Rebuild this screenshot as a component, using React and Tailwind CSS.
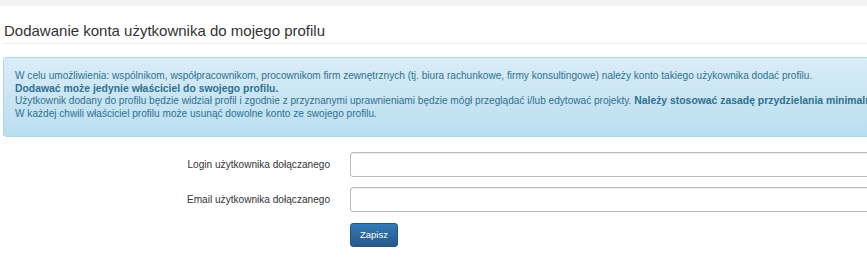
export default function App() {
  return (
    <div className="h-[270px] w-[867px] overflow-hidden bg-white font-['Liberation_Sans',Arial,sans-serif] text-[#333]">
      <div className="h-[6px] bg-[#f4f4f4]" />
      <div className="w-[1000px] pl-[3px]">
        <h3 className="mt-[16px] border-b border-[#eeeeee] pb-[4px] pl-[1px] text-[15px] leading-[17px] font-normal">
          Dodawanie konta użytkownika do mojego profilu
        </h3>

        <div className="mt-[13px] whitespace-nowrap rounded-[3px] border border-[#aed8ee] bg-gradient-to-b from-[#d9edf7] to-[#b9def0] pl-[11px] pt-[12px] pb-[15px] text-[10.1px] leading-[12.7px] text-[#31708f]">
          <div>W celu umożliwienia: wspólnikom, współpracownikom, procownikom firm zewnętrznych (tj. biura rachunkowe, firmy konsultingowe) należy konto takiego użykownika dodać profilu.</div>
          <div className="text-[10.4px] font-bold">Dodawać może jedynie właściciel do swojego profilu.</div>
          <div>
            Użytkownik dodany do profilu będzie widział profil i zgodnie z przyznanymi uprawnieniami będzie mógł przeglądać i/lub edytować projekty.{" "}
            <span className="text-[10.4px] font-bold">Należy stosować zasadę przydzielania minimalnych uprawnień.</span>
          </div>
          <div>W każdej chwili właściciel profilu może usunąć dowolne konto ze swojego profilu.</div>
        </div>

        <div className="mt-[15px] flex flex-col gap-[10.5px]">
          <div className="flex items-center gap-[20px]">
            <label className="w-[327px] text-right text-[10.1px]">Login użytkownika dołączanego</label>
            <input className="h-[25px] w-[560px] rounded-[3px] border border-[#bbbbbb] bg-white shadow-[inset_0_1px_1px_rgba(0,0,0,0.075)] outline-none" />
          </div>
          <div className="flex items-center gap-[20px]">
            <label className="w-[327px] text-right text-[10.1px]">Email użytkownika dołączanego</label>
            <input className="h-[25px] w-[560px] rounded-[3px] border border-[#bbbbbb] bg-white shadow-[inset_0_1px_1px_rgba(0,0,0,0.075)] outline-none" />
          </div>
          <div className="flex gap-[20px]">
            <div className="w-[327px]" />
            <button className="h-[24px] w-[48px] rounded-[3px] border border-[#245580] bg-gradient-to-b from-[#337ab7] to-[#265a88] text-[9.5px] text-white">
              Zapisz
            </button>
          </div>
        </div>
      </div>
    </div>
  );
}
